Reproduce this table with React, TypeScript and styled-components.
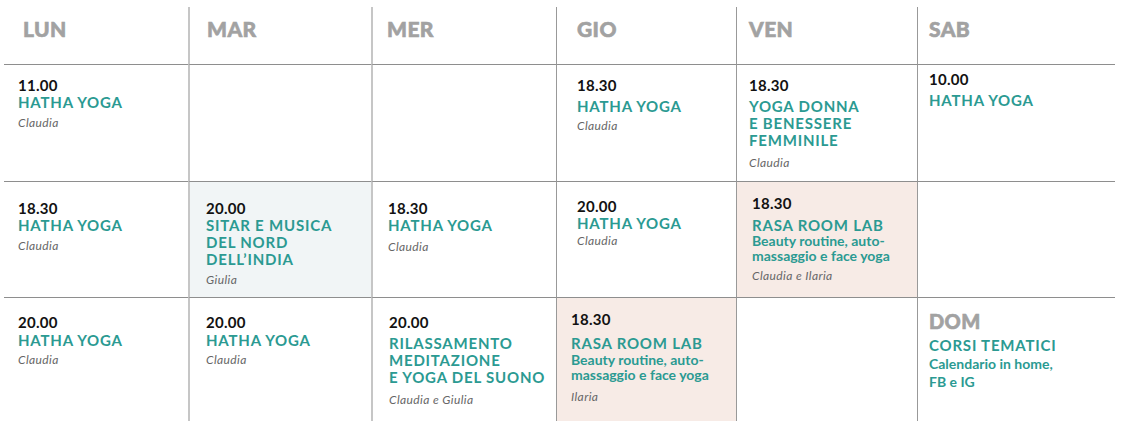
import React from 'react';
import styled, { createGlobalStyle } from 'styled-components';

type Tone = 'plain' | 'mist' | 'blush';
type Line = 'none' | 'light' | 'dark';

interface Slot {
  time?: string;
  day?: string;
  title?: string[];
  sub?: string[];
  who?: string;
  tone?: Tone;
  pl: number;
  pt: number;
  tg?: number;
  sg?: number;
  slh?: number;
  wg?: number;
}

const days = [
  { name: 'LUN', pl: 19 },
  { name: 'MAR', pl: 17 },
  { name: 'MER', pl: 14 },
  { name: 'GIO', pl: 20 },
  { name: 'VEN', pl: 12 },
  { name: 'SAB', pl: 11 },
];

const lines: Line[] = ['none', 'light', 'light', 'dark', 'dark', 'dark'];

const rasa = ['Beauty routine, auto-', 'massaggio e face yoga'];

const week: Slot[][] = [
  [
    { time: '11.00', title: ['HATHA YOGA'], who: 'Claudia', pl: 14, pt: 11 },
    { pl: 16, pt: 11 },
    { pl: 16, pt: 11 },
    { time: '18.30', title: ['HATHA YOGA'], who: 'Claudia', pl: 20, pt: 11, tg: 4, wg: 4 },
    {
      time: '18.30',
      title: ['YOGA DONNA', 'E BENESSERE', 'FEMMINILE'],
      who: 'Claudia',
      pl: 12,
      pt: 11,
      tg: 4,
      wg: 7,
    },
    { time: '10.00', title: ['HATHA YOGA'], pl: 11, pt: 5, tg: 4 },
  ],
  [
    { time: '18.30', title: ['HATHA YOGA'], who: 'Claudia', pl: 14, pt: 17 },
    {
      time: '20.00',
      title: ['SITAR E MUSICA', 'DEL NORD', 'DELL\u2019INDIA'],
      who: 'Giulia',
      tone: 'mist',
      pl: 16,
      pt: 17,
    },
    { time: '18.30', title: ['HATHA YOGA'], who: 'Claudia', pl: 15, pt: 17, wg: 6 },
    { time: '20.00', title: ['HATHA YOGA'], who: 'Claudia', pl: 20, pt: 15, wg: 2 },
    {
      time: '18.30',
      title: ['RASA ROOM LAB'],
      sub: rasa,
      who: 'Claudia e Ilaria',
      tone: 'blush',
      pl: 15,
      pt: 12,
      tg: 5,
      sg: -1,
      wg: 6,
    },
    { pl: 11, pt: 17 },
  ],
  [
    { time: '20.00', title: ['HATHA YOGA'], who: 'Claudia', pl: 14, pt: 15, tg: 1, wg: 4 },
    { time: '20.00', title: ['HATHA YOGA'], who: 'Claudia', pl: 16, pt: 15, tg: 1, wg: 4 },
    {
      time: '20.00',
      title: ['RILASSAMENTO', 'MEDITAZIONE', 'E YOGA DEL SUONO'],
      who: 'Claudia e Giulia',
      pl: 16,
      pt: 15,
      tg: 4,
      wg: 7,
    },
    {
      time: '18.30',
      title: ['RASA ROOM LAB'],
      sub: rasa,
      who: 'Ilaria',
      tone: 'blush',
      pl: 14,
      pt: 12,
      tg: 7,
      wg: 8,
    },
    { pl: 12, pt: 15 },
    {
      day: 'DOM',
      title: ['CORSI TEMATICI'],
      sub: ['Calendario in home,', 'FB e IG'],
      pl: 11,
      pt: 11,
      tg: 4,
      sg: 1,
      slh: 18,
    },
  ],
];

const GlobalStyle = createGlobalStyle`
  html, body {
    margin: 0;
    padding: 0;
    background: #ffffff;
  }
  body {
    font-family: Lato, "Liberation Sans", sans-serif;
    -webkit-font-smoothing: antialiased;
  }
`;

const toneBg: Record<Tone, string> = {
  plain: 'transparent',
  mist: '#f1f5f6',
  blush: '#f7ebe6',
};

const lineStyle: Record<Line, string> = {
  none: '0',
  light: '2px solid #c6c6c6',
  dark: '1px solid #999999',
};

const Board = styled.div`
  display: grid;
  grid-template-columns: 184px 183px 185px 180px 181px 198px;
  grid-template-rows: 58px 117px 116px 123px;
  width: 1111px;
  margin: 7px 0 0 4px;
`;

const Cell = styled.div<{ $line: Line; $tone?: Tone; $last?: boolean; $pl: number; $pt: number }>`
  box-sizing: border-box;
  border-left: ${(p) => lineStyle[p.$line]};
  border-bottom: ${(p) => (p.$last ? '0' : '1px solid #8e8e8e')};
  background: ${(p) => toneBg[p.$tone || 'plain']};
  padding: ${(p) => `${p.$pt}px 0 0 ${p.$pl}px`};
  display: flex;
  flex-direction: column;
  align-items: flex-start;
`;

const DayName = styled.div`
  font-size: 21px;
  line-height: 25px;
  font-weight: 900;
  color: #a2a2a2;
  -webkit-text-stroke: 0.6px #a2a2a2;
  letter-spacing: 0.4px;
`;

const SundayName = styled(DayName)`
  font-size: 20px;
  line-height: 24px;
`;

const Time = styled.div`
  font-size: 15px;
  line-height: 18px;
  font-weight: 700;
  color: #121212;
  letter-spacing: 0.3px;
`;

const Title = styled.div<{ $gap?: number }>`
  margin-top: ${(p) => p.$gap || 0}px;
  font-size: 15px;
  line-height: 17px;
  font-weight: 700;
  color: #2b9a92;
  letter-spacing: 0.8px;
  white-space: nowrap;
`;

const Sub = styled.div<{ $gap?: number; $lh?: number }>`
  margin-top: ${(p) => p.$gap || 0}px;
  font-size: 14px;
  line-height: ${(p) => p.$lh || 15}px;
  font-weight: 700;
  color: #2b9a92;
  white-space: nowrap;
`;

const Who = styled.div<{ $gap?: number }>`
  margin-top: ${(p) => (p.$gap === undefined ? 5 : p.$gap)}px;
  font-size: 12px;
  line-height: 13px;
  font-style: italic;
  color: #666666;
  letter-spacing: 0.4px;
`;

const SlotCell: React.FC<{ slot: Slot; line: Line; last: boolean }> = ({ slot, line, last }) => (
  <Cell $line={line} $tone={slot.tone} $last={last} $pl={slot.pl} $pt={slot.pt}>
    {slot.day && <SundayName>{slot.day}</SundayName>}
    {slot.time && <Time>{slot.time}</Time>}
    {slot.title && (
      <Title $gap={slot.tg}>
        {slot.title.map((t) => (
          <div key={t}>{t}</div>
        ))}
      </Title>
    )}
    {slot.sub && (
      <Sub $gap={slot.sg} $lh={slot.slh}>
        {slot.sub.map((s) => (
          <div key={s}>{s}</div>
        ))}
      </Sub>
    )}
    {slot.who && <Who $gap={slot.wg}>{slot.who}</Who>}
  </Cell>
);

const App: React.FC = () => (
  <>
    <GlobalStyle />
    <Board>
      {days.map((d, i) => (
        <Cell key={d.name} $line={lines[i]} $pl={d.pl} $pt={9}>
          <DayName>{d.name}</DayName>
        </Cell>
      ))}
      {week.map((row, r) =>
        row.map((slot, c) => (
          <SlotCell key={`${r}-${c}`} slot={slot} line={lines[c]} last={r === week.length - 1} />
        ))
      )}
    </Board>
  </>
);

export default App;
